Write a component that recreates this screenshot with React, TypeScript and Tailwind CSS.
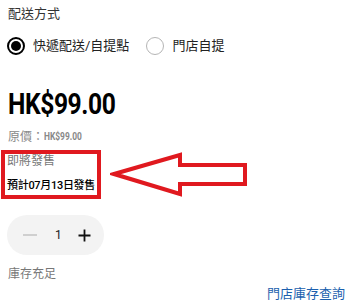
import React from 'react';

const font = { fontFamily: 'Roboto, "Noto Sans CJK TC", sans-serif' };

const Radio: React.FC<{ checked?: boolean; label: string }> = ({ checked, label }) => (
  <label className="flex items-center gap-[8px]">
    {checked ? (
      <span className="w-[18px] h-[18px] rounded-full border-2 border-black flex items-center justify-center">
        <span className="w-[10px] h-[10px] rounded-full bg-black" />
      </span>
    ) : (
      <span className="w-[18px] h-[18px] rounded-full border-[1.5px] border-[#b5b5b5]" />
    )}
    <span className="text-[13px] text-[#222]">{label}</span>
  </label>
);

export default function App() {
  return (
    <div className="w-[351px] h-[306px] bg-white relative overflow-hidden" style={font}>
      <div className="px-[8px]">
        <div className="h-[28px] leading-[28px] text-[13px] text-[#333]">配送方式</div>

        <div className="h-[36px] flex items-center gap-[17px] -ml-[1px]">
          <Radio checked label="快遞配送/自提點" />
          <Radio label="門店自提" />
        </div>

        <div className="mt-[20px] h-[40px] leading-[40px] text-[30px] font-bold text-black tracking-[-0.5px] origin-left scale-x-[0.82]">
          HK$99.00
        </div>

        <div className="h-[26px] leading-[26px] text-[12px] text-[#888] whitespace-nowrap flex items-center">
          <span>原價：</span>
          <span className="inline-block font-bold text-[10.5px] origin-left scale-x-[0.8]">HK$99.00</span>
        </div>

        <div className="-ml-[7px] w-[100px] border-4 border-[#e0191f] pl-[2px] pb-[2px]">
          <div className="h-[14px] leading-[14px] text-[12px] text-[#777]">即將發售</div>
          <div className="mt-[11px] h-[14px] leading-[14px] text-[11px] text-black font-medium whitespace-nowrap tracking-[-0.3px]">
            預計07月13日發售
          </div>
        </div>

        <div className="mt-[16px] -ml-[1px] w-[97px] h-[40px] rounded-full bg-[#f3f3f3] flex items-center">
          <span className="ml-[16px] w-[14px] h-[1.5px] bg-[#cfcfcf]" />
          <span className="ml-[18px] text-[12px] text-[#222]">1</span>
          <svg className="ml-[16px]" width="13" height="13" viewBox="0 0 13 13">
            <path d="M6.5 0.5v12M0.5 6.5h12" stroke="#111" strokeWidth="1.8" />
          </svg>
        </div>

        <div className="mt-[9px] h-[20px] leading-[20px] text-[12px] text-[#777]">庫存充足</div>

        <div className="h-[20px] leading-[20px] text-[13px] text-[#1b5fae] text-right -mr-[2px]">
          門店庫存查詢
        </div>
      </div>

      <svg className="absolute left-[110px] top-[148px]" width="140" height="52" viewBox="0 0 140 52">
        <path
          d="M4 26 L70 7 L70 17 L135 17 L135 36 L70 36 L70 46 Z"
          fill="none"
          stroke="#e0191f"
          strokeWidth="4"
          strokeLinejoin="miter"
        />
      </svg>
    </div>
  );
}
